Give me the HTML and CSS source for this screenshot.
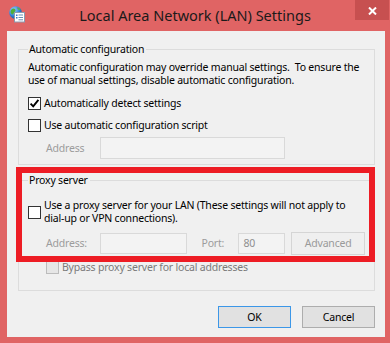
FILE: index.html
```html
<!DOCTYPE html>
<html>
<head>
<meta charset="utf-8">
<link rel="stylesheet" href="styles.css">
</head>
<body>
<div class="window">
  <div class="titlebar">
    <svg class="app-icon" width="16" height="17" viewBox="0 0 16 17">
      <defs>
        <radialGradient id="gl" cx="0.35" cy="0.3" r="0.8">
          <stop offset="0" stop-color="#9fd3ff"/>
          <stop offset="0.6" stop-color="#2d7fd4"/>
          <stop offset="1" stop-color="#15508f"/>
        </radialGradient>
      </defs>
      <circle cx="6.5" cy="6.5" r="6.3" fill="url(#gl)"/>
      <path d="M2.5 3.5 C4 2 6 2.5 6.5 4 C7 5.5 5 6 4.5 7.5 C4 9 2.5 8.5 1.8 7 C1.4 5.8 1.7 4.4 2.5 3.5 Z" fill="#4fae3a"/>
      <path d="M8 1.5 C9.5 1.6 11 2.6 11.6 4 C10.5 4.3 9.3 3.8 8.6 3 Z" fill="#58b441"/>
      <rect x="5.5" y="6.5" width="10" height="9.5" fill="#ffffff" stroke="#8a9bb0" stroke-width="1"/>
      <rect x="7" y="8.5" width="1.5" height="1.5" fill="#3a78c8"/>
      <rect x="9.5" y="8.5" width="4.5" height="1" fill="#6a8db5"/>
      <rect x="7" y="11" width="1.5" height="1.5" fill="#3a78c8"/>
      <rect x="9.5" y="11" width="4.5" height="1" fill="#6a8db5"/>
      <rect x="9.5" y="13.3" width="4.5" height="1" fill="#6a8db5"/>
    </svg>
    <div class="title">Local Area Network (LAN) Settings</div>
    <div class="close">
      <svg width="9" height="8" viewBox="0 0 9 8"><path d="M1 0.5 L8 7.5 M8 0.5 L1 7.5" stroke="#ffffff" stroke-width="2"/></svg>
    </div>
  </div>
  <div class="client">
    <fieldset class="group group-auto">
      <legend>Automatic configuration</legend>
      <p class="desc">Automatic configuration may override manual settings.&nbsp; To ensure the<br>use of manual settings, disable automatic configuration.</p>
      <div class="check check-first">
        <span class="cb"><svg width="11" height="11" viewBox="0 0 11 11"><path d="M1.6 5.6 L4.2 8.3 L9.4 1.8" fill="none" stroke="#000" stroke-width="1.9"/></svg></span>
        <span>Automatically detect settings</span>
      </div>
      <div class="check check-second">
        <span class="cb"></span>
        <span>Use automatic configuration script</span>
      </div>
      <div class="field-row">
        <span class="lbl lbl-auto">Address</span>
        <span class="input input-auto"></span>
      </div>
    </fieldset>

    <fieldset class="group group-proxy">
      <legend>Proxy server</legend>
      <div class="check check-proxy">
        <span class="cb"></span>
        <span>Use a proxy server for your LAN (These settings will not apply to<br>dial-up or VPN connections).</span>
      </div>
      <div class="proxy-row">
        <span class="lbl lbl-addr">Address:</span>
        <span class="input input-addr"></span>
        <span class="lbl lbl-port">Port:</span>
        <span class="input input-port">80</span>
        <span class="btn btn-disabled">Advanced</span>
      </div>
      <div class="check check-bypass">
        <span class="cb cb-disabled"></span>
        <span>Bypass proxy server for local addresses</span>
      </div>
    </fieldset>

    <div class="buttons">
      <span class="btn btn-default">OK</span>
      <span class="btn">Cancel</span>
    </div>
  </div>
  <div class="highlight"></div>
</div>
</body>
</html>
```

FILE: styles.css
```css
* { box-sizing: border-box; }

html, body {
  margin: 0;
  padding: 0;
}

body {
  width: 390px;
  height: 343px;
  background: #e06464;
  font-family: "Noto Sans", "Open Sans", sans-serif;
  font-size: 10.5px;
  letter-spacing: -0.2px;
  color: #000;
  overflow: hidden;
}

.window {
  position: relative;
  width: 390px;
  height: 343px;
  background: #e06464;
}

.titlebar {
  height: 31px;
  display: grid;
  grid-template-columns: 1fr auto 1fr;
  align-items: start;
}

.app-icon {
  margin: 6px 0 0 9px;
  justify-self: start;
}

.title {
  font-size: 14.5px;
  letter-spacing: 0;
  line-height: 20px;
  margin-top: 5px;
  color: #1a1a1a;
  white-space: nowrap;
}

.close {
  justify-self: end;
  width: 34px;
  height: 20px;
  margin-right: 1px;
  background: #c75050;
  display: flex;
  align-items: center;
  justify-content: center;
  padding-top: 2px;
}

.close svg { display: block; }

.client {
  margin: 0 5px 0 7px;
  height: 306px;
  background: #f0f0f0;
  padding-top: 11px;
  overflow: hidden;
}

.group {
  margin: 0 0 0 11px;
  width: 357px;
  border: 1px solid #dcdcdc;
  padding: 0 9px 5px 9px;
  min-width: 0;
}

.group legend {
  margin-left: 0;
  padding: 0 2px 0 1px;
  line-height: 14px;
}

.desc {
  margin: 5px 0 0 0;
  line-height: 13px;
  white-space: nowrap;
}

.check {
  display: flex;
  align-items: center;
  gap: 3px;
  line-height: 13px;
  white-space: nowrap;
}

.check-first { margin-top: 8px; height: 16px; }
.check-second { margin-top: 6px; height: 16px; }

.cb {
  flex: none;
  width: 13px;
  height: 13px;
  border: 1px solid #333;
  background: #fff;
  display: flex;
  align-items: center;
  justify-content: center;
}

.cb svg { display: block; }

.cb-disabled {
  border-color: #bcbcbc;
  background: #e6e6e6;
}

.field-row {
  display: flex;
  align-items: center;
  margin-top: 4px;
  padding-left: 18px;
}

.lbl {
  color: #9c9c9c;
  line-height: 13px;
}

.lbl-auto { width: 54px; }

.input {
  display: block;
  height: 22px;
  border: 1px solid #d9d9d9;
  background: #f3f3f3;
  color: #8f8f8f;
  line-height: 18px;
  padding-left: 4px;
}

.input-auto { width: 185px; }

.group-proxy {
  margin-top: 8px;
  padding-bottom: 16px;
}

.check-proxy {
  margin-top: 12px;
  align-items: center;
}

.proxy-row {
  display: flex;
  align-items: center;
  margin-top: 7px;
  padding-left: 18px;
}

.lbl-addr { width: 54px; }
.input-addr { width: 87px; height: 21px; }
.lbl-port { margin-left: 15px; width: 37px; }
.input-port { width: 47px; height: 21px; }

.btn {
  display: flex;
  align-items: center;
  justify-content: center;
  width: 73px;
  height: 22px;
  border: 1px solid #adadad;
  background: #e1e1e1;
  line-height: 13px;
}

.btn-disabled {
  margin-left: 6px;
  width: 74px;
  height: 23px;
  border-color: #d5d5d5;
  background: #efefef;
  color: #9a9a9a;
}

.check-bypass {
  margin-top: 5px;
  padding-left: 18px;
  color: #7a7a7a;
  height: 14px;
}

.buttons {
  display: flex;
  justify-content: flex-end;
  gap: 11px;
  margin: 15px 10px 0 0;
}

.btn-default {
  border-color: #3c97e8;
}

.highlight {
  position: absolute;
  left: 16px;
  top: 167px;
  width: 359px;
  height: 95px;
  border: 6px solid #ed1c24;
  pointer-events: none;
}
```
